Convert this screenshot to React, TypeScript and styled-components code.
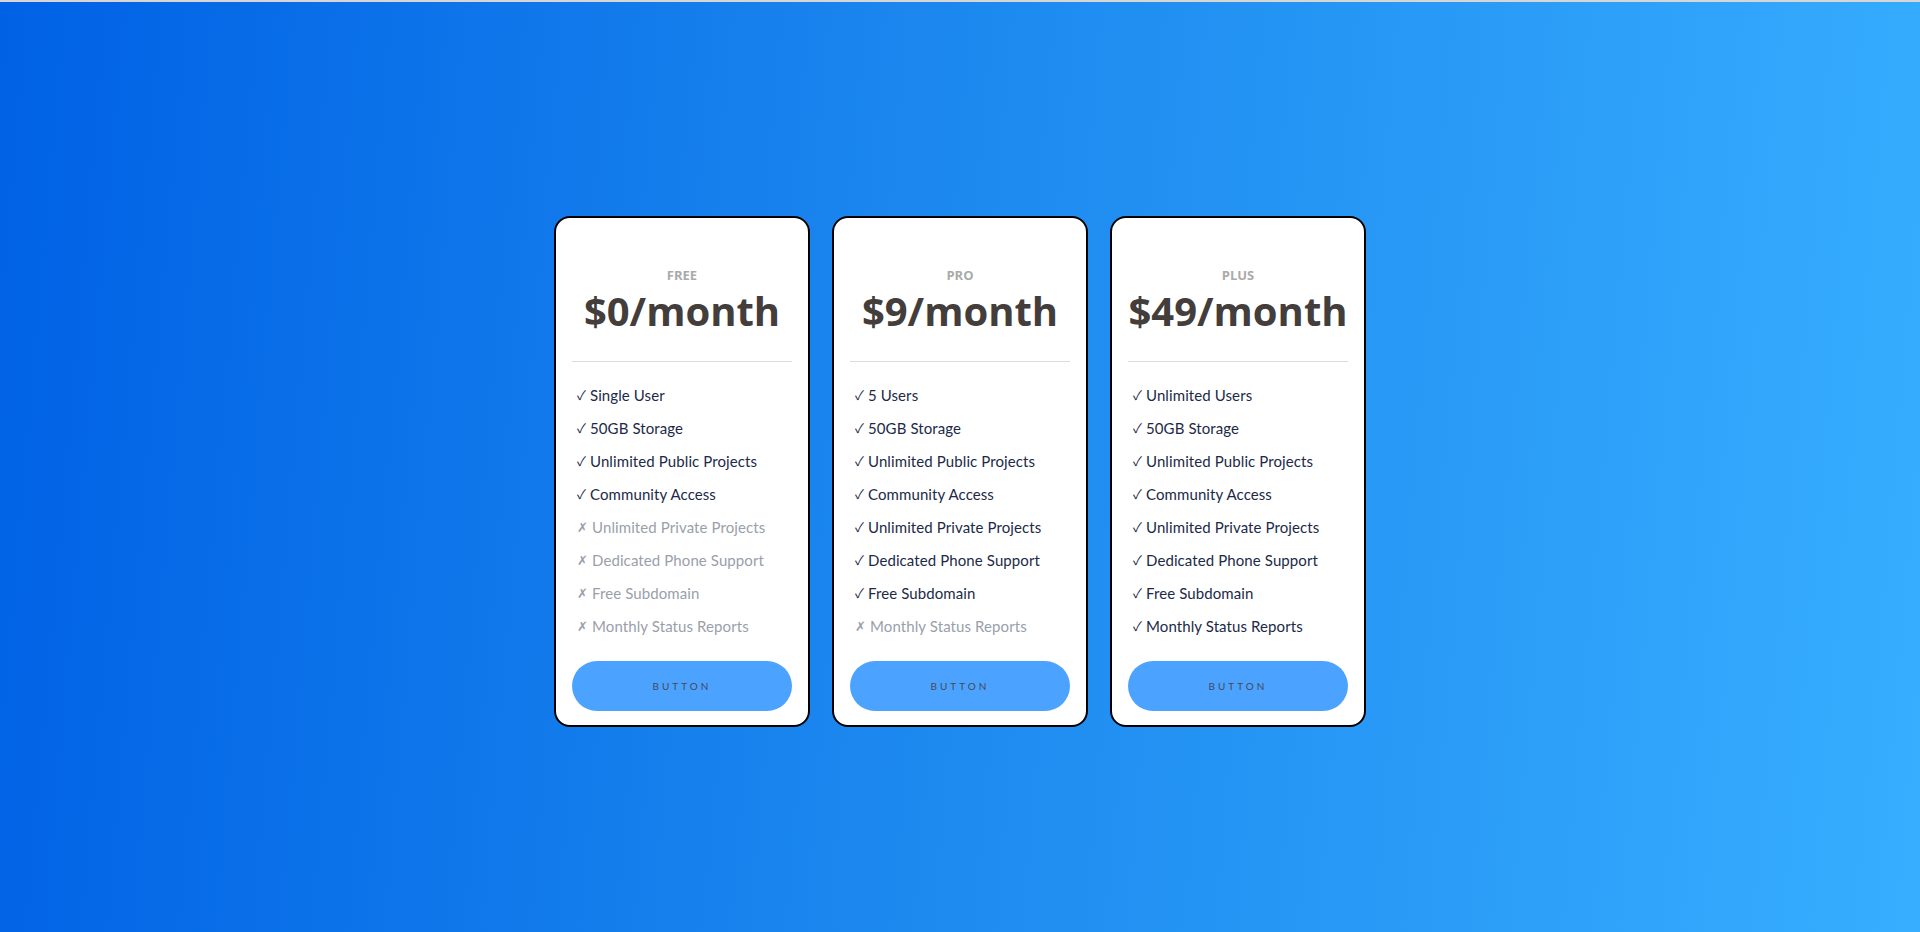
import React from 'react';
import styled, { createGlobalStyle } from 'styled-components';

const plans = [
  {
    name: 'FREE',
    price: '$0/month',
    features: [
      ['Single User', true],
      ['50GB Storage', true],
      ['Unlimited Public Projects', true],
      ['Community Access', true],
      ['Unlimited Private Projects', false],
      ['Dedicated Phone Support', false],
      ['Free Subdomain', false],
      ['Monthly Status Reports', false],
    ],
  },
  {
    name: 'PRO',
    price: '$9/month',
    features: [
      ['5 Users', true],
      ['50GB Storage', true],
      ['Unlimited Public Projects', true],
      ['Community Access', true],
      ['Unlimited Private Projects', true],
      ['Dedicated Phone Support', true],
      ['Free Subdomain', true],
      ['Monthly Status Reports', false],
    ],
  },
  {
    name: 'PLUS',
    price: '$49/month',
    features: [
      ['Unlimited Users', true],
      ['50GB Storage', true],
      ['Unlimited Public Projects', true],
      ['Community Access', true],
      ['Unlimited Private Projects', true],
      ['Dedicated Phone Support', true],
      ['Free Subdomain', true],
      ['Monthly Status Reports', true],
    ],
  },
] as { name: string; price: string; features: [string, boolean][] }[];

export default function App() {
  return (
    <>
      <GlobalStyle />
      <Page>
        <Cards>
          {plans.map((plan) => (
            <Card key={plan.name}>
              <PlanName>{plan.name}</PlanName>
              <Price>{plan.price}</Price>
              <Divider />
              <Features>
                {plan.features.map(([label, on]) => (
                  <Feature key={label} $on={on}>
                    <Mark>{on ? '✓' : '✗'}</Mark>
                    {label}
                  </Feature>
                ))}
              </Features>
              <Button>BUTTON</Button>
            </Card>
          ))}
        </Cards>
      </Page>
    </>
  );
}

const GlobalStyle = createGlobalStyle`
  html, body {
    margin: 0;
    padding: 0;
  }
  body {
    border-top: 2px solid #d6d6d6;
    font-family: 'Open Sans', 'Liberation Sans', sans-serif;
  }
`;

const Page = styled.div`
  height: 930px;
  box-sizing: border-box;
  padding-top: 214px;
  display: flex;
  justify-content: center;
  align-items: flex-start;
  background: linear-gradient(95deg, #0061e5 0%, #1a86ee 45%, #37aeff 100%);
`;

const Cards = styled.div`
  display: flex;
  gap: 22px;
`;

const Card = styled.div`
  width: 256px;
  box-sizing: border-box;
  background: #fff;
  border: 2px solid #000;
  border-radius: 16px;
  padding: 48px 16px 14px;
  display: flex;
  flex-direction: column;
  align-items: stretch;
`;

const PlanName = styled.div`
  text-align: center;
  font-size: 13px;
  font-weight: 700;
  color: #aaaaaa;
  line-height: 18px;
`;

const Price = styled.div`
  text-align: center;
  font-size: 40px;
  font-weight: 700;
  color: #433d3b;
  line-height: 54px;
  margin-bottom: 23px;
`;

const Divider = styled.hr`
  border: none;
  border-top: 1px solid #dcdcdc;
  margin: 0;
`;

const Features = styled.ul`
  list-style: none;
  margin: 16px 0 19px;
  padding: 0 0 0 5px;
  font-family: 'Lato', 'Liberation Sans', sans-serif;
`;

const Feature = styled.li<{ $on: boolean }>`
  height: 33px;
  display: flex;
  align-items: center;
  font-size: 15px;
  color: ${(p) => (p.$on ? '#1c2a48' : '#9aa0aa')};
  letter-spacing: 0.1px;
`;

const Mark = styled.span`
  font-family: 'Noto Sans CJK SC', 'DejaVu Sans', sans-serif;
  font-size: 13px;
  line-height: 1;
  margin-right: 4px;
`;

const Button = styled.button`
  height: 50px;
  border: none;
  border-radius: 25px;
  background: #4ca2ff;
  color: #444a55;
  font-family: 'Lato', 'Liberation Sans', sans-serif;
  font-size: 10px;
  letter-spacing: 3px;
  cursor: pointer;
`;
